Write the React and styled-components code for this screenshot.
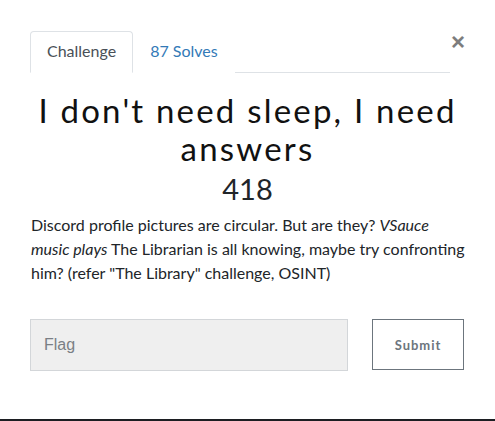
import React from 'react';
import styled, { createGlobalStyle } from 'styled-components';

const GlobalStyle = createGlobalStyle`
  html, body {
    margin: 0;
    padding: 0;
    background: #1c1e22;
  }
  * {
    box-sizing: border-box;
  }
`;

const Modal = styled.div`
  background: #fff;
  min-height: 419px;
  padding: 31px 30px 0 30px;
  font-family: 'Lato', 'Liberation Sans', sans-serif;
  color: #212529;
`;

const Header = styled.div`
  display: flex;
  align-items: flex-start;
`;

const Tabs = styled.ul`
  display: flex;
  flex: 1;
  list-style: none;
  margin: 0;
  padding: 0;
  border-bottom: 1px solid #dee2e6;
`;

const Tab = styled.li`
  margin-bottom: -1px;
  padding: 7px 16px 9px;
  font-size: 16px;
  line-height: 24px;
  border: 1px solid ${(p) => (p.active ? '#dee2e6' : 'transparent')};
  border-bottom-color: ${(p) => (p.active ? '#fff' : 'transparent')};
  border-radius: 4px 4px 0 0;
  color: ${(p) => (p.active ? '#495057' : '#337ab7')};
  background: #fff;
`;

const Close = styled.button`
  border: 0;
  background: none;
  padding: 0;
  margin: -4px 0 0 1px;
  width: 14px;
  height: 30px;
  font-family: 'Liberation Sans', sans-serif;
  font-size: 24px;
  font-weight: 700;
  line-height: 20px;
  color: #7d7d7d;
`;

const Title = styled.h2`
  margin: 18px 0 0 0;
  text-align: center;
  font-family: 'Lato', sans-serif;
  font-weight: 400;
  font-size: 33px;
  line-height: 38px;
  letter-spacing: 2.2px;
  color: #111;
`;

const Value = styled.h3`
  margin: 4px 0 0 0;
  text-align: center;
  font-weight: 400;
  font-size: 29px;
  line-height: 36px;
  color: #212529;
`;

const Description = styled.p`
  margin: 6px 0 0 1px;
  font-size: 16px;
  line-height: 24px;
`;

const SubmitRow = styled.div`
  display: flex;
  gap: 24px;
  margin-top: 34px;
  padding-right: 1px;
`;

const FlagInput = styled.input`
  width: 318px;
  height: 52px;
  padding: 0 13px;
  background: #efefef;
  border: 1px solid #d3d6d9;
  font-family: 'Liberation Sans', sans-serif;
  font-size: 16px;
  color: #495057;
  outline: none;
  &::placeholder {
    color: #7a7f85;
  }
`;

const SubmitButton = styled.button`
  width: 92px;
  height: 51px;
  background: #fff;
  border: 1px solid #6c757d;
  font-family: 'Lato', sans-serif;
  font-weight: 700;
  font-size: 13px;
  letter-spacing: 1px;
  color: #6c757d;
`;

export default function App() {
  return (
    <>
      <GlobalStyle />
      <Modal>
        <Header>
          <Tabs>
            <Tab active>Challenge</Tab>
            <Tab>87 Solves</Tab>
          </Tabs>
          <Close aria-label="Close">×</Close>
        </Header>
        <Title>I don't need sleep, I need answers</Title>
        <Value>418</Value>
        <Description>
          Discord profile pictures are circular. But are they? <em>VSauce music plays</em> The
          Librarian is all knowing, maybe try confronting him? (refer "The Library" challenge,
          OSINT)
        </Description>
        <SubmitRow>
          <FlagInput placeholder="Flag" />
          <SubmitButton>Submit</SubmitButton>
        </SubmitRow>
      </Modal>
    </>
  );
}
